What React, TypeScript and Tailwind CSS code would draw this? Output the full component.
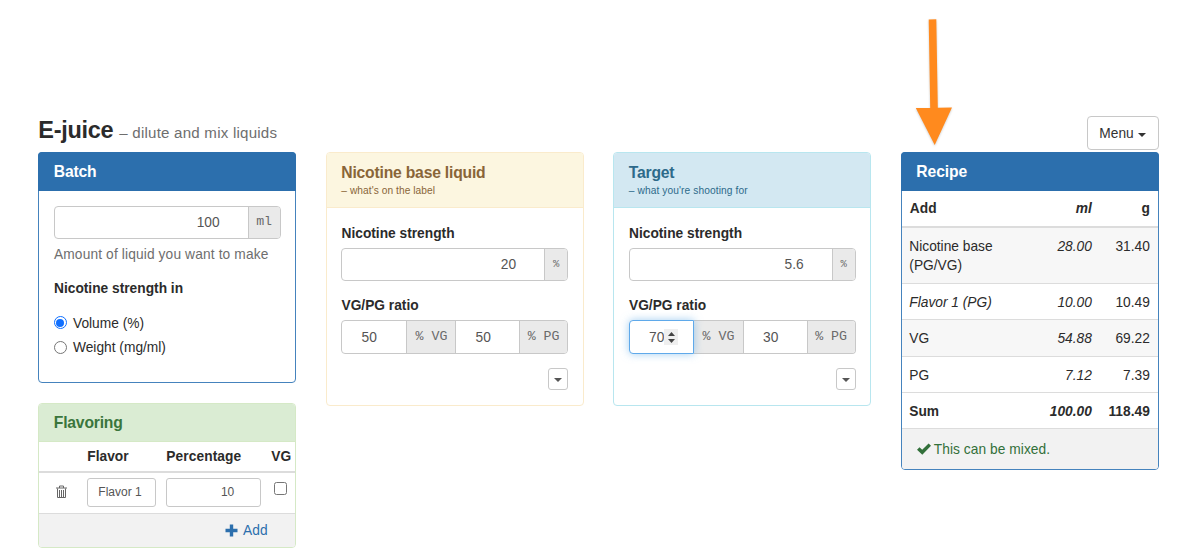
import React from "react";

function Caret({ className = "w-2" }: { className?: string }) {
  return (
    <svg viewBox="0 0 8 4" preserveAspectRatio="none" className={"h-1 shrink-0 " + className} fill="currentColor">
      <path d="M0 0h8L4 4z" />
    </svg>
  );
}

function Addon({ className = "", children }: { className?: string; children: React.ReactNode }) {
  return (
    <span
      className={
        "flex shrink-0 items-center justify-center whitespace-pre bg-[#eaeaea] font-['Liberation_Mono',monospace] tracking-normal text-[#6b6b6b] " +
        className
      }
    >
      {children}
    </span>
  );
}

function Strength({ value, className }: { value: string; className: string }) {
  return (
    <div className="flex h-[33.5px] overflow-hidden rounded-[4px] border border-[#c8c8c8]">
      <div className={"flex flex-1 items-center justify-end pt-px text-[#555] " + className}>{value}</div>
      <Addon className="w-[23px] border-l border-[#c8c8c8] text-[10.5px]">%</Addon>
    </div>
  );
}

function MoreButton() {
  return (
    <div className="mt-[14.5px] flex justify-end">
      <button className="flex h-[22px] w-5 items-center justify-center rounded-[3px] border border-[#c8c8c8] pt-[2px] text-[#555]">
        <Caret className="w-2" />
      </button>
    </div>
  );
}

const recipe = [
  { name: "Nicotine base (PG/VG)", ml: "28.00", g: "31.40", row: "h-[56.4px] bg-[#f7f7f7]", label: "" },
  { name: "Flavor 1 (PG)", ml: "10.00", g: "10.49", row: "h-[36.4px]", label: "italic" },
  { name: "VG", ml: "54.88", g: "69.22", row: "h-[36.4px] bg-[#f7f7f7]", label: "" },
  { name: "PG", ml: "7.12", g: "7.39", row: "h-[36.4px]", label: "" },
  { name: "Sum", ml: "100.00", g: "118.49", row: "h-[36.4px] font-bold", label: "" },
];

export default function App() {
  return (
    <div className="relative h-[554px] w-[1200px] overflow-hidden bg-white pl-[38.3px] pr-[41.5px] pt-[116px] font-['Liberation_Sans',Arial,sans-serif] text-[13.75px] leading-[19.7px] text-[#2b2b2b]">
      <svg className="absolute left-[910px] top-[14px]" width="48" height="136" viewBox="910 14 48 136">
        <path
          d="M928.7 19.5 936.3 19.3 937.8 107.8 952 107.5 934.7 145 915.8 108 930.2 107.9z"
          fill="#ff8a1e"
          className="drop-shadow-[0_1px_1px_rgba(0,0,0,0.2)]"
        />
      </svg>

      <header className="flex h-[36px] items-start justify-between">
        <h1 className="flex items-baseline whitespace-nowrap">
          <span className="text-[23.5px] font-bold leading-[28px] tracking-[-0.3px]">E-juice</span>
          <span className="ml-[6px] text-[15.1px] tracking-[0.22px] text-[#6e6e6e]">– dilute and mix liquids</span>
        </h1>
        <button className="flex h-[34px] w-[72px] items-center justify-center gap-[4px] rounded-[4px] border border-[#c8c8c8] bg-white text-[#333]">
          <span className="pt-[1.5px]">Menu</span>
          <Caret className="mt-[3px] w-2" />
        </button>
      </header>

      <main className="grid grid-cols-[258px_258px_258px_258px] items-start gap-x-[29.5px]">
        <div className="flex flex-col gap-[19.5px]">
          <section className="h-[231px] rounded-[4px] border border-[#4583bd]">
            <h2 className="-mx-px -mt-px flex h-[38.5px] items-center rounded-t-[4px] bg-[#2c6fad] pl-[15.5px] pt-[1.5px] text-[15.7px] font-bold tracking-[-0.2px] text-white">
              Batch
            </h2>
            <div className="px-[14.7px] pt-[15px]">
              <div className="flex h-[33.5px] overflow-hidden rounded-[4px] border border-[#c8c8c8]">
                <div className="flex flex-1 items-center justify-end pr-[28px] pt-[2px] text-[#555]">100</div>
                <Addon className="w-8 border-l border-[#c8c8c8] text-[13.3px]">ml</Addon>
              </div>
              <p className="mt-[6px] whitespace-nowrap tracking-[0.13px] text-[#6e6e6e]">Amount of liquid you want to make</p>
              <p className="mt-[14px] font-bold">Nicotine strength in</p>
              <label className="mt-[14.5px] flex items-center">
                <span className="mr-[6px] flex size-[13px] items-center justify-center rounded-full border border-[#0f6fff]">
                  <span className="size-[8px] rounded-full bg-[#0f6fff]" />
                </span>
                <span className="relative top-px">Volume (%)</span>
              </label>
              <label className="mt-[5px] flex items-center">
                <span className="mr-[6px] size-[13px] rounded-full border border-[#767676]" />
                Weight (mg/ml)
              </label>
            </div>
          </section>

          <section className="h-[145px] overflow-hidden rounded-[4px] border border-[#d5e9c6]">
            <h2 className="flex h-[38px] items-center border-b border-[#d5e9c6] bg-[#daecd3] pl-[14.5px] pt-[1.5px] text-[15.7px] font-bold tracking-[-0.2px] text-[#3a763d]">
              Flavoring
            </h2>
            <div className="grid h-[31px] grid-cols-[48px_79px_105px_1fr] items-center border-b-2 border-[#dcdcdc] pt-[1.5px] font-bold">
              <span />
              <span>Flavor</span>
              <span className="tracking-[0.08px]">Percentage</span>
              <span>VG</span>
            </div>
            <div className="grid h-[41px] grid-cols-[48px_79px_108px_1fr] items-center border-b border-[#dcdcdc] text-[12px] text-[#555]">
              <svg className="-mt-[2px] ml-[17px]" width="11" height="14" viewBox="0 0 11 14" fill="none" stroke="#666">
                <path d="M0 3h11M3.5 3V1h4v2M1.5 3.5v9h8v-9M3.5 5v7M5.5 5v7M7.5 5v7" strokeWidth="1" />
              </svg>
              <span className="flex h-[29px] w-[69px] items-center rounded-[3px] border border-[#c8c8c8] pl-[10px] pt-[1.5px]">Flavor 1</span>
              <span className="flex h-[29px] w-[95px] items-center justify-end rounded-[3px] border border-[#c8c8c8] pr-[26px] pt-[1.5px]">10</span>
              <span className="-mt-[9px] size-[13px] rounded-[2.5px] border border-[#767676]" />
            </div>
            <div className="flex h-[33px] items-center justify-end bg-[#f2f2f2] pr-[27.5px] text-[#2c6fad]">
              <svg className="mr-[5px]" width="13" height="13" viewBox="0 0 13 13" fill="currentColor">
                <path d="M4.8.5h3.4v4.3h4.3v3.4H8.2v4.3H4.8V8.2H.5V4.8h4.3z" />
              </svg>
              <span className="pt-[1.5px] tracking-[0.15px]">Add</span>
            </div>
          </section>
        </div>

        <section className="h-[254px] overflow-hidden rounded-[4px] border border-[#faebcc]">
          <header className="h-[55px] border-b border-[#faebcc] bg-[#fcf6e0] pl-[14.5px] pt-[9.5px] text-[#896538]">
            <h2 className="text-[15.7px] font-bold tracking-[-0.2px]">Nicotine base liquid</h2>
            <p className="text-[10.2px] leading-[18px] tracking-[0.06px]">– what's on the label</p>
          </header>
          <div className="px-[14.7px] pt-[15.5px]">
            <p className="font-bold">Nicotine strength</p>
            <div className="mt-[4.5px]">
              <Strength value="20" className="pr-[28px]" />
            </div>
            <p className="mt-[15px] font-bold">VG/PG ratio</p>
            <div className="mt-[4.5px] flex h-[33.5px] overflow-hidden rounded-[4px] border border-[#c8c8c8]">
              <div className="flex w-[64px] items-center pl-[19px] pt-[1.5px] text-[#555]">50</div>
              <Addon className="w-[49px] border-l border-[#c8c8c8] text-[13.3px]">% VG</Addon>
              <div className="flex flex-1 items-center border-l border-[#c8c8c8] pl-[19px] pt-[1.5px] text-[#555]">50</div>
              <Addon className="w-12 border-l border-[#c8c8c8] text-[13.3px]">% PG</Addon>
            </div>
            <MoreButton />
          </div>
        </section>

        <section className="h-[254px] overflow-hidden rounded-[4px] border border-[#b8e6ef]">
          <header className="h-[55px] border-b border-[#b8e6ef] bg-[#d3e8f2] pl-[14.5px] pt-[9.5px] text-[#2d6a8a]">
            <h2 className="text-[15.7px] font-bold tracking-[-0.2px]">Target</h2>
            <p className="text-[10.2px] leading-[18px] tracking-[0.1px]">– what you're shooting for</p>
          </header>
          <div className="px-[14.7px] pt-[15.5px]">
            <p className="font-bold">Nicotine strength</p>
            <div className="mt-[4.5px]">
              <Strength value="5.6" className="pr-[28px]" />
            </div>
            <p className="mt-[15px] font-bold">VG/PG ratio</p>
            <div className="mt-[4.5px] flex h-[33.5px] rounded-[4px]">
              <div className="z-10 flex w-[65px] items-center rounded-l-[4px] border border-[#5fa9ea] bg-white pl-[19px] text-[#555] shadow-[0_0_8px_rgba(102,175,233,0.6)]">
                <span className="pt-[1.5px]">70</span>
                <span className="flex h-[16px] w-[14px] flex-col items-center justify-center gap-[3px] bg-[#efefef] text-[#444]">
                  <Caret className="w-[7px] rotate-180" />
                  <Caret className="w-[7px]" />
                </span>
              </div>
              <div className="flex flex-1 overflow-hidden rounded-r-[4px] border border-l-0 border-[#c8c8c8]">
                <Addon className="w-[49px] text-[13.3px]">% VG</Addon>
                <div className="flex flex-1 items-center border-l border-[#c8c8c8] pl-[19px] pt-[1.5px] text-[#555]">30</div>
                <Addon className="w-12 border-l border-[#c8c8c8] text-[13.3px]">% PG</Addon>
              </div>
            </div>
            <MoreButton />
          </div>
        </section>

        <section className="h-[318px] rounded-[4px] border border-[#4583bd]">
          <h2 className="-mx-px -mt-px flex h-[38.5px] items-center rounded-t-[4px] bg-[#2c6fad] pl-[15.5px] pt-[1.5px] text-[15.7px] font-bold tracking-[-0.1px] text-white">
            Recipe
          </h2>
          <div className="grid h-[37px] grid-cols-[1fr_60px_58px] items-center border-b-2 border-[#dcdcdc] px-2 pt-[2px] text-right font-bold">
            <span className="text-left">Add</span>
            <span className="italic">ml</span>
            <span>g</span>
          </div>
          {recipe.map((r) => (
            <div
              key={r.name}
              className={"grid grid-cols-[1fr_60px_58px] items-start border-b border-[#dcdcdc] pl-[7.5px] pr-2 pt-[9px] text-right " + r.row}
            >
              <span className={"w-[100px] text-left " + r.label}>{r.name}</span>
              <span className="italic">{r.ml}</span>
              <span>{r.g}</span>
            </div>
          ))}
          <div className="flex h-[39.5px] items-center rounded-b-[3px] bg-[#f2f2f2] pl-[15px] text-[#32703a]">
            <svg className="mr-[3px]" width="14" height="12" viewBox="0 0 14 12" fill="currentColor">
              <path d="M0 6.8 2.5 4.3 5.2 6.8 11.6.4 14 2.7 5.3 11.7z" />
            </svg>
            <span className="pt-[2px] tracking-[0.05px]">This can be mixed.</span>
          </div>
        </section>
      </main>
    </div>
  );
}
